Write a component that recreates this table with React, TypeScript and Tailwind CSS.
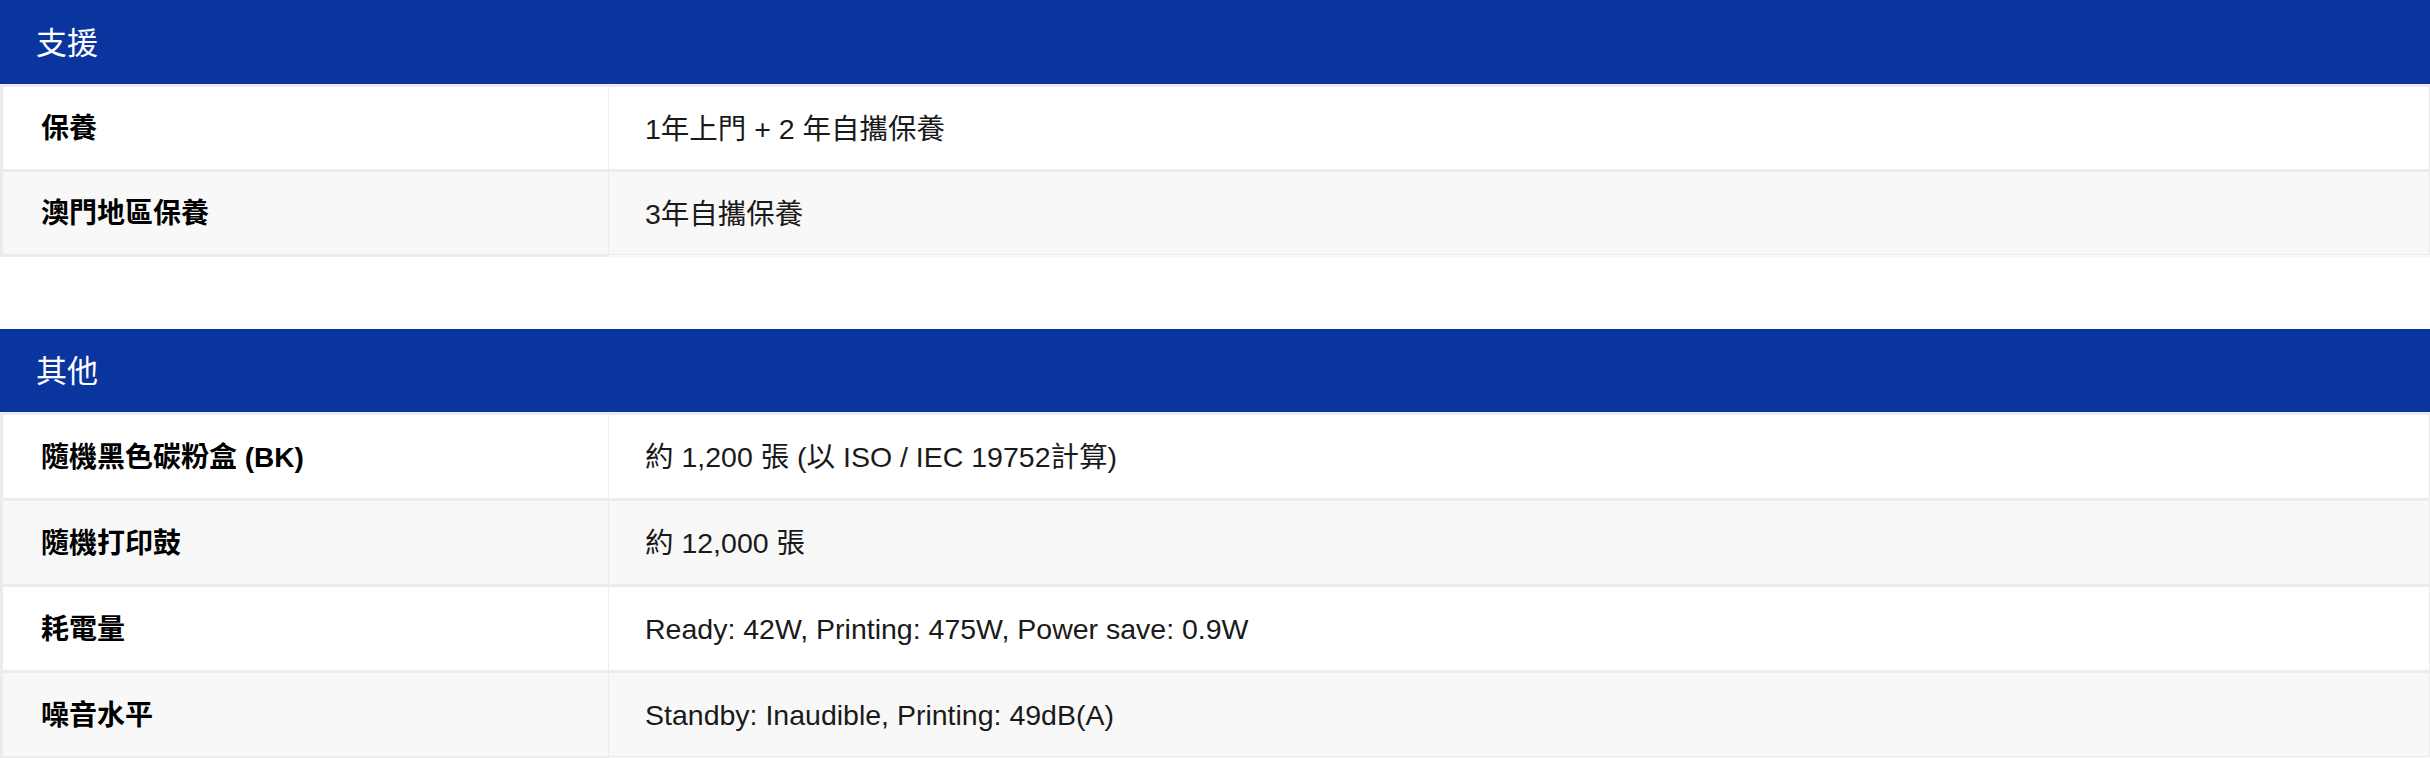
const sections = [
  {
    title: "支援",
    tall: false,
    rows: [
      { label: "保養", value: "1年上門 + 2 年自攜保養" },
      { label: "澳門地區保養", value: "3年自攜保養" },
    ],
  },
  {
    title: "其他",
    tall: true,
    rows: [
      { label: "隨機黑色碳粉盒 (BK)", value: "約 1,200 張 (以 ISO / IEC 19752計算)" },
      { label: "隨機打印鼓", value: "約 12,000 張" },
      { label: "耗電量", value: "Ready: 42W, Printing: 475W, Power save: 0.9W" },
      { label: "噪音水平", value: "Standby: Inaudible, Printing: 49dB(A)" },
    ],
  },
];

type Row = { label: string; value: string };

function SpecSection({ title, tall, rows }: { title: string; tall: boolean; rows: Row[] }) {
  return (
    <section>
      <div
        className={
          "bg-[#0a359e] flex items-center pl-[36px] pt-[2px] text-[31px] text-white " +
          (tall ? "h-[83px]" : "h-[84px]")
        }
      >
        {title}
      </div>
      <div>
        {rows.map((row, i) => {
          const last = i === rows.length - 1;
          let h = tall ? "h-[86px] " : "h-[85px] ";
          if (last) h = tall ? "h-[89px] " : "h-[88px] ";
          return (
            <div
              key={row.label}
              className={
                "grid grid-cols-[609px_1fr] border-t-[3px] border-[#ececec] " +
                h +
                (i % 2 === 1 ? "bg-[#f8f8f8]" : "bg-white")
              }
            >
              <div
                className={
                  "flex items-center pl-[38px] pt-[2px] border-l-[3px] border-r border-[#ececec] font-bold text-black " +
                  (last ? "border-b-[3px]" : "")
                }
              >
                {row.label}
              </div>
              <div
                className={
                  "flex items-center pl-[36px] pt-[2px] border-r border-[#ececec] text-[28.5px] text-[#1a1a1a] " +
                  (last ? "border-b mb-[2px]" : "")
                }
              >
                {row.value}
              </div>
            </div>
          );
        })}
      </div>
    </section>
  );
}

export default function App() {
  return (
    <main
      className="min-h-screen bg-white text-[28px] leading-none"
      style={{ fontFamily: '"Liberation Sans", "Noto Sans CJK TC", sans-serif' }}
    >
      <div className="flex flex-col gap-[72px]">
        {sections.map((s) => (
          <SpecSection key={s.title} title={s.title} tall={s.tall} rows={s.rows} />
        ))}
      </div>
    </main>
  );
}
